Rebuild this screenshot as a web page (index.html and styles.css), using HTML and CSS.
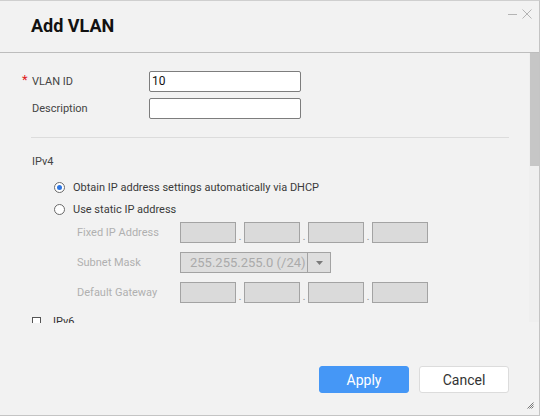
FILE: index.html
```html
<!DOCTYPE html>
<html lang="en">
<head>
<meta charset="utf-8">
<title>Add VLAN</title>
<link rel="stylesheet" href="styles.css">
</head>
<body>
<div class="dialog">
  <div class="header">
    <h1 class="title">Add VLAN</h1>
    <div class="win-controls">
      <svg class="ctl" width="9" height="10" viewBox="0 0 9 10"><line x1="0" y1="5.5" x2="9" y2="5.5" stroke="#b4b4b4" stroke-width="1"/></svg>
      <svg class="ctl" width="10" height="10" viewBox="0 0 10 10"><path d="M0.5 0.5 L9.5 9.5 M9.5 0.5 L0.5 9.5" stroke="#b4b4b4" stroke-width="1" fill="none"/></svg>
    </div>
  </div>
  <div class="body">
    <div class="pane">
      <div class="field-row">
        <span class="req">*</span>
        <span class="field-label">VLAN ID</span>
        <div class="text-input">10</div>
      </div>
      <div class="field-row second">
        <span class="req"></span>
        <span class="field-label">Description</span>
        <div class="text-input"></div>
      </div>
      <div class="separator"></div>
      <div class="section-label">IPv4</div>
      <div class="radio-row first">
        <span class="radio checked"></span>
        <span class="radio-text">Obtain IP address settings automatically via DHCP</span>
      </div>
      <div class="radio-row">
        <span class="radio"></span>
        <span class="radio-text">Use static IP address</span>
      </div>
      <div class="ip-row first">
        <span class="ip-label">Fixed IP Address</span>
        <span class="ip-box"></span><span class="dot">.</span><span class="ip-box"></span><span class="dot">.</span><span class="ip-box"></span><span class="dot">.</span><span class="ip-box"></span>
      </div>
      <div class="ip-row">
        <span class="ip-label">Subnet Mask</span>
        <div class="select">
          <span class="select-value">255.255.255.0 (/24)</span>
          <span class="select-arrow"><svg width="7" height="4" viewBox="0 0 7 4"><path d="M0 0 H7 L3.5 4 Z" fill="#7a7a7a"/></svg></span>
        </div>
      </div>
      <div class="ip-row">
        <span class="ip-label">Default Gateway</span>
        <span class="ip-box"></span><span class="dot">.</span><span class="ip-box"></span><span class="dot">.</span><span class="ip-box"></span><span class="dot">.</span><span class="ip-box"></span>
      </div>
      <div class="check-row">
        <span class="checkbox"></span>
        <span class="check-text">IPv6</span>
      </div>
    </div>
    <div class="scrollbar"><div class="thumb"></div></div>
  </div>
  <div class="footer">
    <button class="btn primary">Apply</button>
    <button class="btn">Cancel</button>
    <svg class="grip" width="7" height="7" viewBox="0 0 7 7"><path d="M6.5 0.5 L0.5 6.5 M6.5 2.5 L2.5 6.5 M6.5 4.5 L4.5 6.5" stroke="#777" stroke-width="1" fill="none"/></svg>
  </div>
</div>
</body>
</html>
```
FILE: styles.css
```css
* { box-sizing: border-box; }
html, body { margin: 0; padding: 0; background: #ffffff; }
body { font-family: Roboto, "Liberation Sans", Arial, sans-serif; color: #333; }

.dialog {
  width: 540px;
  height: 416px;
  background: #f2f2f2;
  border-top: 1px solid #cfcfcf;
  border-right: 1px solid #c4c4c4;
  border-bottom: 1px solid #c4c4c4;
  display: flex;
  flex-direction: column;
  position: relative;
}

.header {
  height: 52px;
  flex: none;
  border-bottom: 1px solid #bdbdbd;
  display: flex;
  justify-content: space-between;
  align-items: flex-start;
}
.title {
  margin: 0;
  padding: 14px 0 0 31px;
  font-size: 18px;
  font-weight: 700;
  line-height: 21px;
  color: #111;
}
.win-controls {
  display: flex;
  gap: 5px;
  padding: 8px 7px 0 0;
}
.ctl { display: block; }

.body {
  height: 270px;
  flex: none;
  display: flex;
}
.pane {
  width: 529px;
  height: 270px;
  overflow: hidden;
  padding-top: 18px;
}
.scrollbar {
  width: 10px;
  height: 269px;
  background: #efefef;
  padding-left: 1px;
}
.thumb {
  height: 113px;
  background: #c6c6c6;
}

.field-row {
  display: flex;
  align-items: center;
  height: 21px;
  padding-left: 22px;
  font-size: 11px;
}
.field-row.second { margin-top: 6px; }
.req {
  width: 10px;
  color: #e0201b;
  font-size: 13px;
  line-height: 21px;
  align-self: flex-start;
  margin-top: -2px;
  height: 21px;
}
.field-label { width: 117px; color: #444; }
.text-input {
  width: 152px;
  height: 21px;
  border: 1px solid #7d7d7d;
  border-radius: 2px;
  background: #fff;
  font-size: 12px;
  line-height: 19px;
  padding-left: 2px;
  color: #111;
}

.separator {
  margin: 18px 0 0 31px;
  width: 478px;
  height: 1px;
  background: #dcdcdc;
}
.section-label {
  margin: 16px 0 0 32px;
  font-size: 11px;
  line-height: 16px;
  color: #444;
}

.radio-row {
  display: flex;
  align-items: center;
  height: 22px;
  padding-left: 54px;
  font-size: 11px;
  color: #3a3a3a;
}
.radio-row.first { margin-top: 6px; }
.radio {
  width: 11px;
  height: 11px;
  border: 1px solid #6a6a6a;
  border-radius: 50%;
  background: #fff;
  margin-right: 8px;
  position: relative;
}
.radio.checked::after {
  content: "";
  position: absolute;
  left: 2px;
  top: 2px;
  width: 5px;
  height: 5px;
  border-radius: 50%;
  background: #2f76e0;
}

.ip-row {
  display: flex;
  align-items: center;
  height: 21px;
  margin-top: 9px;
  padding-left: 77px;
  font-size: 11px;
}
.ip-row.first { margin-top: 2px; }
.ip-label { width: 103px; color: #b0b0b0; }
.ip-box {
  width: 56px;
  height: 21px;
  background: #dadada;
  border: 1px solid #a3a3a3;
}
.dot {
  width: 8px;
  text-align: center;
  color: #8a8a8a;
  font-size: 10px;
  align-self: flex-end;
  line-height: 12px;
}
.select {
  width: 151px;
  height: 21px;
  display: flex;
  background: #dedede;
  border: 1px solid #a3a3a3;
}
.select-value {
  width: 127px;
  border-right: 1px solid #a3a3a3;
  font-size: 13px;
  line-height: 19px;
  padding-left: 9px;
  color: #aaa;
}
.select-arrow {
  flex: 1;
  display: flex;
  align-items: center;
  justify-content: center;
}

.check-row {
  display: flex;
  align-items: center;
  height: 16px;
  margin-top: 10px;
  padding-left: 32px;
  font-size: 11px;
  color: #333;
}
.checkbox {
  width: 9px;
  height: 9px;
  border: 1px solid #555;
  background: #fff;
  margin-right: 12px;
}

.footer {
  flex: 1;
  display: flex;
  justify-content: flex-end;
  align-items: flex-start;
  gap: 10px;
  padding: 43px 30px 0 0;
  position: relative;
}
.btn {
  width: 90px;
  height: 27px;
  border: 1px solid #dcdcdc;
  border-radius: 3px;
  background: #fff;
  font-family: Roboto, "Liberation Sans", Arial, sans-serif;
  font-size: 14px;
  color: #333;
  padding: 0;
}
.btn.primary {
  background: #4597f6;
  border-color: #4597f6;
  color: #fff;
}
.grip {
  position: absolute;
  right: 5px;
  bottom: 6px;
}
```
